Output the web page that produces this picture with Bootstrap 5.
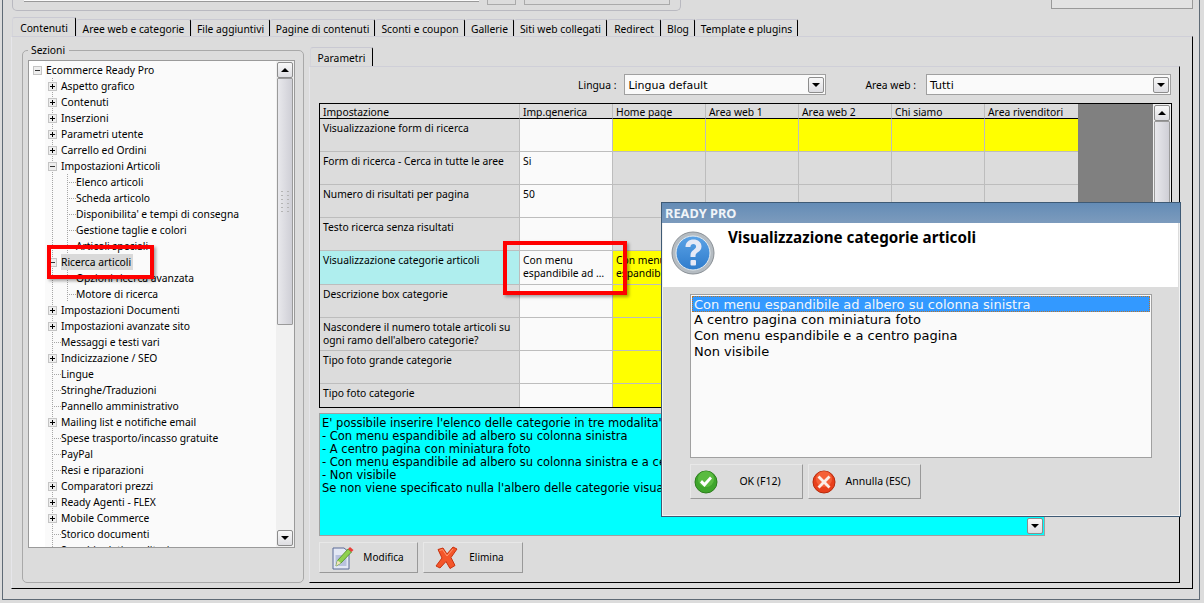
<!DOCTYPE html>
<html lang="it">
<head>
  <meta charset="UTF-8" />
  <title>Ready Pro</title>
  <link href="https://cdn.jsdelivr.net/npm/bootstrap@5.3.0/dist/css/bootstrap.min.css" rel="stylesheet" />
  <style>
    html, body { width: 1204px; height: 603px; overflow: hidden; }
    body { background: #dcdcdc; color: #000; font: 10.3px/13px "Noto Sans", sans-serif; }
    .app-frame { position: relative; width: 1198px; height: 600px; margin-left: 2px; border: 1px solid #5f6b76; border-top: 0; padding: 0 6px 9px 8px; }
    /* parte alta tagliata */
    .top-stub { height: 18px; }
    .top-group { width: 669px; height: 11px; margin-left: 1px; padding: 0 10px 0 11px; border: 1px solid #b9b9c0; border-top: 0; border-radius: 0 0 5px 5px; }
    .top-input { height: 2px; background: #fafafa; border-bottom: 1px solid #999; }
    .top-btn { height: 5px; border: 1px solid #aaa; border-top: 0; }
    .top-btn-a { width: 29px; }
    .top-btn-b { width: 146px; }
    .top-right { width: 142px; height: 9px; border: 1px solid #999; border-top: 0; background: #e2e2e2; }
    /* tab */
    .app-tabs { height: 18px; align-items: flex-end; margin-left: 1px; }
    .app-tab { height: 17px; display: flex; align-items: center; justify-content: center; padding: 3px 0 0; border-top: 1px solid #c9c9d2; border-left: 1px solid #d4d4da; border-right: 1px solid #000; border-radius: 3px 2px 0 0; white-space: nowrap; }
    .app-tab.on { height: 19px; padding: 3px 0 0; }
    .main-tabs .app-tab:nth-child(1) { width: 64px; }
    .main-tabs .app-tab:nth-child(2) { width: 115px; }
    .main-tabs .app-tab:nth-child(3) { width: 79px; }
    .main-tabs .app-tab:nth-child(4) { width: 105px; }
    .main-tabs .app-tab:nth-child(5) { width: 90px; }
    .main-tabs .app-tab:nth-child(6) { width: 49px; }
    .main-tabs .app-tab:nth-child(7) { width: 93px; }
    .main-tabs .app-tab:nth-child(8) { width: 54px; }
    .main-tabs .app-tab:nth-child(9) { width: 34px; }
    .main-tabs .app-tab:nth-child(10) { width: 103px; }
    .main-panel { height: 553px; border: 1px solid #000; border-top-color: #cfcfd8; border-left-color: #e6e6ea; padding: 10px 12px 5px 10px; gap: 5px; }
    /* sezioni */
    .sez-box { position: relative; width: 282px; height: 533px; margin-top: 3px; border: 1px solid #a9a9a9; border-radius: 5px; padding: 9px 8px 0 5px; }
    .sez-title { position: absolute; left: 5px; top: -7px; background: #dcdcdc; padding: 0 4px 0 3px; }
    .sez-tree { height: 488px; border: 1px solid #9a9a9a; background: #fafafa; overflow: hidden; }
    .tree-list { flex: 1; margin: 0; padding: 1px 0 0; background: linear-gradient(90deg, #fff 16px, #fafafa 16px); overflow: hidden; }
    .tree-row { height: 16px; padding-left: 2px; white-space: nowrap; }
    .tree-row .lbl { padding: 0 2px 0 0; height: 16px; line-height: 17px; }
    .tree-row .lbl.sel { background: #d9d9d9; }
    .gut { width: 15px; height: 16px; flex: none; display: flex; align-items: center; padding-left: 2px; }
    .gut-v { background: repeating-linear-gradient(#a6a6a6 0 1px, transparent 1px 2px) 6px 0 / 1px 100% no-repeat; }
    .gut-t { background: repeating-linear-gradient(#a6a6a6 0 1px, transparent 1px 2px) 6px 0 / 1px 100% no-repeat, repeating-linear-gradient(90deg, #a6a6a6 0 1px, transparent 1px 2px) 6px 8px / 9px 1px no-repeat; }
    .tw { width: 9px; height: 9px; background: #eee; border: 1px solid #c4c4c4; display: block;
      background-image: linear-gradient(#000, #000), linear-gradient(#000, #000); background-size: 5px 1px, 1px 5px; background-position: center, center; background-repeat: no-repeat; }
    .tw.minus { background-size: 5px 1px, 0 0; background-image: linear-gradient(#333, #333), none; }
    /* scrollbar */
    .vscroll { width: 18px; flex: none; background: #f0f0f0; padding: 1px; }
    .sb-btn { width: 16px; height: 16px; flex: none; display: flex; align-items: center; justify-content: center; background: linear-gradient(#f8f8f8, #dedee2); border: 1px solid #8c8c8c; border-radius: 2px; }
    .sb-btn::before { content: ""; border-left: 4px solid transparent; border-right: 4px solid transparent; border-bottom: 4px solid #000; }
    .sb-btn.down::before { border-bottom: 0; border-top: 4px solid #000; }
    .sb-thumb { width: 16px; flex: none; background: linear-gradient(90deg, #e8e8ec, #cfcfd6); border: 1px solid #9a9a9a; border-radius: 1px; }
    .tree-thumb { height: 247px; display: flex; align-items: center; justify-content: center; }
    .tree-thumb i { display: block; width: 8px; height: 22px; background: repeating-linear-gradient(#b4b4b4 0 1px, transparent 1px 4px) 0 0 / 2px 100% no-repeat, repeating-linear-gradient(#b4b4b4 0 1px, transparent 1px 4px) 6px 0 / 2px 100% no-repeat; }
    /* parametri */
    .par-area { width: 871px; }
    .par-tabs { height: 19px; align-items: flex-end; margin-left: 1px; }
    .par-tabs .app-tab { width: 63px; height: 19px; }
    .par-panel { height: 517px; border: 1px solid #000; border-top-color: #cfcfd8; border-left-color: #e6e6ea; padding: 7px 7px 0 9px; }
    .filter-bar { height: 21px; margin-bottom: 8px; padding-right: 1px; }
    .filter-bar > span { padding-top: 2px; }
    .combo { height: 21px; background: #fafafa; border: 1px solid #a0a0a0; padding: 0 1px 0 3px; font: 11px/21px "DejaVu Sans", sans-serif; }
    .combo-a { width: 202px; margin-left: 8px; margin-right: 39px; }
    .combo-b { width: 245px; margin-left: 10px; }
    .combo .txt { padding-top: 2px; line-height: 17px; }
    .combo .sb-btn { margin-left: auto; }
    /* griglia */
    .grid-wrap { height: 305px; width: 853px; border: 1px solid #000; background: #808080; }
    .par-grid { width: 758px; table-layout: fixed; border-collapse: separate; border-spacing: 0; }
    .par-grid th, .par-grid td { padding: 3px 2px 0 3px; font-weight: 400; vertical-align: top; line-height: 13px; border-right: 1px solid #bdbdbd; border-bottom: 1px solid #bdbdbd; overflow: hidden; }
    .par-grid th { height: 15px; padding-top: 2px; line-height: 12px; background: #dcdcdc; border-bottom-color: #000; white-space: nowrap; }
    .par-grid td { height: 33px; background: #dcdcdc; }
    .par-grid td.bianca { background: #fafafa; }
    .par-grid td.gialla { background: #ff0; }
    .par-grid td.azzurra { background: #afeeee; }
    .par-grid tr:last-child td { height: 23px; border-bottom: 0; }
    .par-grid td:last-child, .par-grid th:last-child { border-right: 0; }
    .col-nome { width: 200px; }
    .col-area { width: 93px; }
    .grid-scroll { width: 18px; margin-left: auto; height: 100%; background: #f0f0f0; padding: 1px; }
    .grid-thumb { height: 240px; }
    .nota { position: relative; width: 726px; height: 123px; margin-top: 5px; background: #0ff; border: 1px solid #a0a0a0; padding: 3px 3px 0 2px; font: 11.5px/13px "DejaVu Sans", sans-serif; white-space: nowrap; overflow: hidden; }
    .nota .sb-btn { position: absolute; right: 1px; bottom: 1px; }
    .act-btn { background: #dcdcdc; border: 1px solid; border-color: #e8e8e8 #999 #999 #e8e8e8; border-radius: 0; padding: 0; font-size: 10.5px; color: #000; display: flex; align-items: center; }
    .act-mod, .act-del { height: 31px; font-size: 10px; }
    .act-mod { width: 99px; }
    .act-del { width: 100px; }
    .act-mod svg { margin-left: 12px; flex: none; }
    .act-del svg { margin-left: 11px; flex: none; }
    .act-bar { margin-top: 6px; gap: 5px; }
    /* dialogo */
    .dlg { position: absolute; left: 658px; top: 202px; width: 520px; height: 315px; background: #dcdcdc; border: 1px solid #3e5a75; box-shadow: inset -1px -1px 0 #f2f2f2, inset 1px 1px 0 #f2f2f2; }
    .dlg-title { height: 20px; background: linear-gradient(#648cb6, #7c9bbd); color: #f0f4f8; font: 700 12.8px/21px "Noto Sans", sans-serif; padding-left: 3px; }
    .dlg-head { height: 64px; margin: 0 2px 0 1px; background: #fff; padding: 8px 0 0 8px; }
    .dlg-head svg { flex: none; }
    .dlg-head h5 { margin: -2px 0 0 13px; font: 700 15.2px/16px "Noto Sans", sans-serif; }
    .dlg-list { width: 462px; height: 164px; margin: 7px 0 0 28px; background: #fafafa; border: 1px solid #a0a0a0; padding: 1px; font: 13px/16px "DejaVu Sans", sans-serif; }
    .dlg-list div { height: 16px; padding-left: 2px; white-space: nowrap; }
    .dlg-list .pick { background: #3399ff; color: #f2f6fa; outline: 1px dotted #b8742c; outline-offset: -1px; line-height: 17px; }
    .dlg-btns { margin: 6px 0 0 28px; gap: 5px; }
    .dlg-btn { width: 113px; height: 35px; }
    .dlg-btn svg { margin-left: 3px; flex: none; }
    .dlg-btn span { flex: 1; text-align: center; }
    /* evidenziazioni rosse */
    .red-box { position: absolute; border: 4px solid #f00; box-shadow: 2px 2px 3px rgba(0,0,0,.35); }
    .red-a { left: 44px; top: 245px; width: 107px; height: 34px; }
    .red-b { left: 500px; top: 241px; width: 124px; height: 54px; }
  </style>
</head>
<body>
<div class="app-frame">
  <div class="top-stub d-flex justify-content-between">
    <div class="top-group d-flex gap-2">
      <div class="top-input flex-grow-1"></div>
      <div class="top-btn top-btn-a"></div>
      <div class="top-btn top-btn-b"></div>
    </div>
    <div class="top-right"></div>
  </div>

  <div class="main-tabs app-tabs d-flex">
    <div class="app-tab on">Contenuti</div>
    <div class="app-tab">Aree web e categorie</div>
    <div class="app-tab">File aggiuntivi</div>
    <div class="app-tab">Pagine di contenuti</div>
    <div class="app-tab">Sconti e coupon</div>
    <div class="app-tab">Gallerie</div>
    <div class="app-tab">Siti web collegati</div>
    <div class="app-tab">Redirect</div>
    <div class="app-tab">Blog</div>
    <div class="app-tab">Template e plugins</div>
  </div>

  <div class="main-panel d-flex align-items-start">
    <div class="sez-box">
      <div class="sez-title">Sezioni</div>
      <div class="sez-tree d-flex">
        <ul class="tree-list list-unstyled" id="albero"></ul>
        <div class="vscroll d-flex flex-column">
          <div class="sb-btn"></div>
          <div class="sb-thumb tree-thumb"><i></i></div>
          <div class="flex-grow-1"></div>
          <div class="sb-btn down"></div>
        </div>
      </div>
    </div>

    <div class="par-area">
      <div class="par-tabs app-tabs d-flex"><div class="app-tab on">Parametri</div></div>
      <div class="par-panel">
        <div class="filter-bar d-flex align-items-center justify-content-end">
          <span>Lingua :</span>
          <div class="combo combo-a d-flex align-items-center"><span class="txt">Lingua default</span><span class="sb-btn down"></span></div>
          <span>Area web :</span>
          <div class="combo combo-b d-flex align-items-center"><span class="txt">Tutti</span><span class="sb-btn down"></span></div>
        </div>

        <div class="grid-wrap d-flex overflow-hidden">
          <table class="par-grid">
            <colgroup><col class="col-nome"><col class="col-area"><col class="col-area"><col class="col-area"><col class="col-area"><col class="col-area"><col class="col-area"></colgroup>
            <thead>
              <tr><th>Impostazione</th><th>Imp.generica</th><th>Home page</th><th>Area web 1</th><th>Area web 2</th><th>Chi siamo</th><th>Area rivenditori</th></tr>
            </thead>
            <tbody>
              <tr><td>Visualizzazione form di ricerca</td><td class="bianca"></td><td class="gialla"></td><td class="gialla"></td><td class="gialla"></td><td class="gialla"></td><td class="gialla"></td></tr>
              <tr><td>Form di ricerca - Cerca in tutte le aree</td><td class="bianca">Si</td><td></td><td></td><td></td><td></td><td></td></tr>
              <tr><td>Numero di risultati per pagina</td><td class="bianca">50</td><td></td><td></td><td></td><td></td><td></td></tr>
              <tr><td>Testo ricerca senza risultati</td><td class="bianca"></td><td></td><td></td><td></td><td></td><td></td></tr>
              <tr><td class="azzurra">Visualizzazione categorie articoli</td><td class="bianca">Con menu espandibile ad …</td><td class="gialla">Con menu espandibile</td><td class="gialla"></td><td class="gialla"></td><td class="gialla"></td><td class="gialla"></td></tr>
              <tr><td>Descrizione box categorie</td><td class="bianca"></td><td class="gialla"></td><td></td><td></td><td></td><td></td></tr>
              <tr><td>Nascondere il numero totale articoli su ogni ramo dell'albero categorie?</td><td class="bianca"></td><td class="gialla"></td><td></td><td></td><td></td><td></td></tr>
              <tr><td>Tipo foto grande categorie</td><td class="bianca"></td><td class="gialla"></td><td></td><td></td><td></td><td></td></tr>
              <tr><td>Tipo foto categorie</td><td class="bianca"></td><td class="gialla"></td><td></td><td></td><td></td><td></td></tr>
            </tbody>
          </table>
          <div class="grid-scroll d-flex flex-column">
            <div class="sb-btn"></div>
            <div class="sb-thumb grid-thumb"></div>
          </div>
        </div>

        <div class="nota">E' possibile inserire l'elenco delle categorie in tre modalita':<br>- Con menu espandibile ad albero su colonna sinistra<br>- A centro pagina con miniatura foto<br>- Con menu espandibile ad albero su colonna sinistra e a centro pagina<br>- Non visibile<br>Se non viene specificato nulla l'albero delle categorie visualizzato<span class="sb-btn down"></span></div>

        <div class="act-bar d-flex">
          <button class="btn act-btn act-mod" type="button">
            <svg width="22" height="24" viewBox="0 0 22 24"><path d="M1 2h11l5 4v17H1z" fill="#e4e8f4" stroke="#5a6b96"/><path d="M3.500 9h11v11h-11z" fill="#b9c2de"/><path d="M4 20l1.500-5.500L16 3l3.500 3L9 17z" fill="#8fd14f" stroke="#4d8a22" stroke-width=".8"/><path d="M16 3l2-2 3.500 3-2 2z" fill="#e8403a"/><path d="M4 20l1.500-5.500L9 17z" fill="#f1e3c0"/></svg>
            <span class="flex-grow-1 text-center pe-1">Modifica</span>
          </button>
          <button class="btn act-btn act-del" type="button">
            <svg width="24" height="24" viewBox="0 0 24 24"><path d="M3 3.500l5-1.500 4 6 6-7 4 2-6 8.500 4 8-5 3-4-7-6 6.500L1 20l6-8z" fill="#f4562a" stroke="#c8320f" stroke-width="1" stroke-linejoin="round"/><path d="M4.500 4.500l3-1 4.500 6.500 6-7" fill="none" stroke="#ff9a70" stroke-width="1"/></svg>
            <span class="flex-grow-1 text-center pe-2">Elimina</span>
          </button>
        </div>
      </div>
    </div>
  </div>

  <div class="dlg">
    <div class="dlg-title">READY PRO</div>
    <div class="dlg-head d-flex">
      <svg width="44" height="44" viewBox="0 0 44 44">
        <defs><linearGradient id="bluq" x1="0" y1="0" x2="0" y2="1"><stop offset="0" stop-color="#5aa2e6"/><stop offset="1" stop-color="#2f7ccc"/></linearGradient></defs>
        <circle cx="22" cy="22" r="21" fill="#b5bcc2" stroke="#8a9096"/>
        <circle cx="22" cy="22" r="17" fill="url(#bluq)" stroke="#e8eef2"/>
        <path d="M14.500 16c0-5 3.500-7.500 8-7.500s8 2.700 8 7c0 3-1.700 4.500-3.600 5.800-1.700 1.200-2.400 2-2.400 3.700v1h-5v-1.700c0-2.800 1-4 3-5.400 1.500-1 2.600-1.900 2.600-3.300 0-1.500-1.100-2.500-2.700-2.500-1.800 0-3 1.100-3 3z" fill="#e6e9f6"/>
        <rect x="19.500" y="29" width="5.500" height="5.500" rx="1" fill="#e6e9f6"/>
      </svg>
      <h5>Visualizzazione categorie articoli</h5>
    </div>
    <div class="dlg-list">
      <div class="pick">Con menu espandibile ad albero su colonna sinistra</div>
      <div>A centro pagina con miniatura foto</div>
      <div>Con menu espandibile e a centro pagina</div>
      <div>Non visibile</div>
    </div>
    <div class="dlg-btns d-flex">
      <button class="btn act-btn dlg-btn" type="button">
        <svg width="24" height="24" viewBox="0 0 24 24"><circle cx="12" cy="12" r="11" fill="#3fa52c" stroke="#2b7d1c"/><circle cx="12" cy="9" r="8" fill="#6cc94f" opacity=".6"/><path d="M6 12.500l4.500 4.500L18 8.500l-2-2-5.500 6-2.500-2.500z" fill="#fff"/></svg>
        <span>OK (F12)</span>
      </button>
      <button class="btn act-btn dlg-btn" type="button">
        <svg width="24" height="24" viewBox="0 0 24 24"><circle cx="12" cy="12" r="11" fill="#e8401c" stroke="#b52a0c"/><circle cx="12" cy="9" r="8" fill="#ff7a4f" opacity=".55"/><path d="M7.500 5.500L12 10l4.500-4.500 2 2L14 12l4.500 4.500-2 2L12 14l-4.500 4.500-2-2L10 12 5.500 7.500z" fill="#fbeee8"/></svg>
        <span>Annulla (ESC)</span>
      </button>
    </div>
  </div>

  <div class="red-box red-a"></div>
  <div class="red-box red-b"></div>
</div>

<script>
// [livello, testo, nodo: "+" | "-" | ""]
const voci = [
  [0, "Ecommerce Ready Pro", "-"],
  [1, "Aspetto grafico", "+"],
  [1, "Contenuti", "+"],
  [1, "Inserzioni", "+"],
  [1, "Parametri utente", "+"],
  [1, "Carrello ed Ordini", "+"],
  [1, "Impostazioni Articoli", "-"],
  [2, "Elenco articoli", ""],
  [2, "Scheda articolo", ""],
  [2, "Disponibilita' e tempi di consegna", ""],
  [2, "Gestione taglie e colori", ""],
  [2, "Articoli speciali", ""],
  [1, "Ricerca articoli", "-", true],
  [2, "Opzioni ricerca avanzata", ""],
  [2, "Motore di ricerca", ""],
  [1, "Impostazioni Documenti", "+"],
  [1, "Impostazioni avanzate sito", "+"],
  [1, "Messaggi e testi vari", ""],
  [1, "Indicizzazione / SEO", "+"],
  [1, "Lingue", ""],
  [1, "Stringhe/Traduzioni", ""],
  [1, "Pannello amministrativo", ""],
  [1, "Mailing list e notifiche email", "+"],
  [1, "Spese trasporto/incasso gratuite", ""],
  [1, "PayPal", ""],
  [1, "Resi e riparazioni", ""],
  [1, "Comparatori prezzi", "+"],
  [1, "Ready Agenti - FLEX", "+"],
  [1, "Mobile Commerce", "+"],
  [1, "Storico documenti", ""],
  [1, "Scambio dati venditori", ""]
];
const albero = document.getElementById("albero");
voci.forEach(([liv, testo, nodo, sel]) => {
  const li = document.createElement("li");
  li.className = "tree-row d-flex align-items-center";
  let html = "";
  if (liv === 0) html += `<span class="gut"><span class="tw minus"></span></span>`;
  if (liv === 1) html += `<span class="gut"></span><span class="gut ${nodo ? "gut-v" : "gut-t"}">${nodo ? `<span class="tw ${nodo === "-" ? "minus" : ""}"></span>` : ""}</span>`;
  if (liv === 2) html += `<span class="gut"></span><span class="gut gut-v"></span><span class="gut gut-t"></span>`;
  html += `<span class="lbl ${sel ? "sel" : ""}">${testo}</span>`;
  li.innerHTML = html;
  albero.appendChild(li);
});
</script>
<script src="https://cdn.jsdelivr.net/npm/bootstrap@5.3.0/dist/js/bootstrap.bundle.min.js"></script>
</body>
</html>
